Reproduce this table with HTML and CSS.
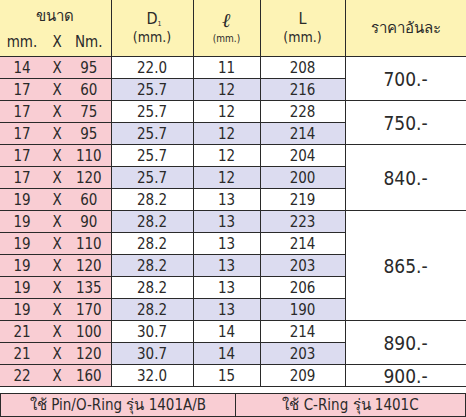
FILE: index.html
```html
<!DOCTYPE html>
<html>
<head>
<meta charset="utf-8">
<link rel="stylesheet" href="styles.css">
</head>
<body>
<div class="page">
<table class="spec">
  <colgroup>
    <col class="c-mm"><col class="c-x"><col class="c-nm">
    <col class="c-d"><col class="c-l1"><col class="c-l"><col class="c-price">
  </colgroup>
  <thead>
    <tr class="h1">
      <th colspan="3" class="hsize">ขนาด</th>
      <th rowspan="2" class="hd"><div class="big">D<span class="sub">1</span></div><div class="unit">(mm.)</div></th>
      <th rowspan="2" class="hell"><div class="ell">ℓ</div><div class="unit-sm">(mm.)</div></th>
      <th rowspan="2" class="hL"><div class="big">L</div><div class="unit">(mm.)</div></th>
      <th rowspan="2" class="hprice">ราคาอันละ</th>
    </tr>
    <tr class="h2">
      <th class="s1">mm.</th><th class="s2">X</th><th class="s3">Nm.</th>
    </tr>
  </thead>
  <tbody>
    <tr class="odd"><td class="s1">14</td><td class="s2">X</td><td class="s3">95</td><td>22.0</td><td>11</td><td>208</td><td rowspan="2" class="price">700.-</td></tr>
    <tr class="even"><td class="s1">17</td><td class="s2">X</td><td class="s3">60</td><td>25.7</td><td>12</td><td>216</td></tr>
    <tr class="odd"><td class="s1">17</td><td class="s2">X</td><td class="s3">75</td><td>25.7</td><td>12</td><td>228</td><td rowspan="2" class="price">750.-</td></tr>
    <tr class="even"><td class="s1">17</td><td class="s2">X</td><td class="s3">95</td><td>25.7</td><td>12</td><td>214</td></tr>
    <tr class="odd"><td class="s1">17</td><td class="s2">X</td><td class="s3">110</td><td>25.7</td><td>12</td><td>204</td><td rowspan="3" class="price">840.-</td></tr>
    <tr class="even"><td class="s1">17</td><td class="s2">X</td><td class="s3">120</td><td>25.7</td><td>12</td><td>200</td></tr>
    <tr class="odd"><td class="s1">19</td><td class="s2">X</td><td class="s3">60</td><td>28.2</td><td>13</td><td>219</td></tr>
    <tr class="even"><td class="s1">19</td><td class="s2">X</td><td class="s3">90</td><td>28.2</td><td>13</td><td>223</td><td rowspan="5" class="price">865.-</td></tr>
    <tr class="odd"><td class="s1">19</td><td class="s2">X</td><td class="s3">110</td><td>28.2</td><td>13</td><td>214</td></tr>
    <tr class="even"><td class="s1">19</td><td class="s2">X</td><td class="s3">120</td><td>28.2</td><td>13</td><td>203</td></tr>
    <tr class="odd"><td class="s1">19</td><td class="s2">X</td><td class="s3">135</td><td>28.2</td><td>13</td><td>206</td></tr>
    <tr class="even"><td class="s1">19</td><td class="s2">X</td><td class="s3">170</td><td>28.2</td><td>13</td><td>190</td></tr>
    <tr class="odd"><td class="s1">21</td><td class="s2">X</td><td class="s3">100</td><td>30.7</td><td>14</td><td>214</td><td rowspan="2" class="price">890.-</td></tr>
    <tr class="even"><td class="s1">21</td><td class="s2">X</td><td class="s3">120</td><td>30.7</td><td>14</td><td>203</td></tr>
    <tr class="odd"><td class="s1">22</td><td class="s2">X</td><td class="s3">160</td><td>32.0</td><td>15</td><td>209</td><td class="price">900.-</td></tr>
  </tbody>
</table>
<div class="foot">
  <div class="fcell">ใช้ Pin/O-Ring รุ่น 1401A/B</div>
  <div class="fcell">ใช้ C-Ring รุ่น 1401C</div>
</div>
</div>
</body>
</html>
```
FILE: styles.css
```css
html, body {
  margin: 0;
  padding: 0;
  background: #ffffff;
}
.page {
  width: 466px;
  font-family: "DejaVu Sans Condensed", "DejaVu Sans", "Noto Sans", sans-serif;
  color: #2a2a2a;
}
.spec {
  border-collapse: collapse;
  table-layout: fixed;
  width: 466px;
}
.c-mm { width: 44px; }
.c-x { width: 26px; }
.c-nm { width: 41px; }
.c-d { width: 82px; }
.c-l1 { width: 67px; }
.c-l { width: 85px; }
.c-price { width: 121px; }

.spec th, .spec td {
  padding: 0;
  text-align: center;
  font-weight: normal;
  border: 1px solid #2a2a2a;
}
.spec thead th {
  background: #fdf3b5;
  border-top: none;
}
.h1 th { height: 26px; }
.h2 th { height: 26px; }
.spec .hsize { border-left: none; border-bottom: none; font-size: 15px; vertical-align: middle; padding-top: 3px; }
.spec .h2 th { border-top: none; font-size: 15px; vertical-align: middle; padding-bottom: 1px; }
.spec th.s1, .spec td.s1 { border-left: none; border-right: none; }
.spec th.s2, .spec td.s2 { border-left: none; border-right: none; }
.spec th.s3, .spec td.s3 { border-left: none; padding-right: 3px; }

.big { font-size: 16px; line-height: 16px; position: relative; }
.sub { position: absolute; font-size: 7px; line-height: 7px; top: 10px; }
.unit { font-size: 14px; line-height: 15px; margin-top: 3px; }
.ell { font-family: "DejaVu Serif", serif; font-style: italic; font-weight: bold; font-size: 20px; line-height: 18px; }
.unit-sm { font-size: 10px; line-height: 12px; margin-top: 4px; }
.hprice { font-size: 15px; border-right: 1px solid #2a2a2a; }

.spec tbody td {
  height: 21px;
  font-size: 15px;
  line-height: 16px;
  background: #ffffff;
}
.spec tbody tr.even td.v { background: #dcdcf0; }
.spec tbody td.s1, .spec tbody td.s2, .spec tbody td.s3 { background: #f9cdd3; }
.spec tbody tr.even td:nth-child(4),
.spec tbody tr.even td:nth-child(5),
.spec tbody tr.even td:nth-child(6) { background: #dcdcf0; }
.spec tbody tr.odd td.price,
.spec tbody tr.even td.price { background: #ffffff; font-size: 19px; }

.foot {
  display: flex;
  margin-top: 6px;
  border: 1px solid #2a2a2a;
  background: #f9cdd3;
}
.fcell {
  height: 22px;
  line-height: 22px;
  font-size: 15px;
  text-align: center;
}
.fcell:first-child { width: 234px; border-right: 1px solid #2a2a2a; }
.fcell:last-child { flex: 1; }
```
